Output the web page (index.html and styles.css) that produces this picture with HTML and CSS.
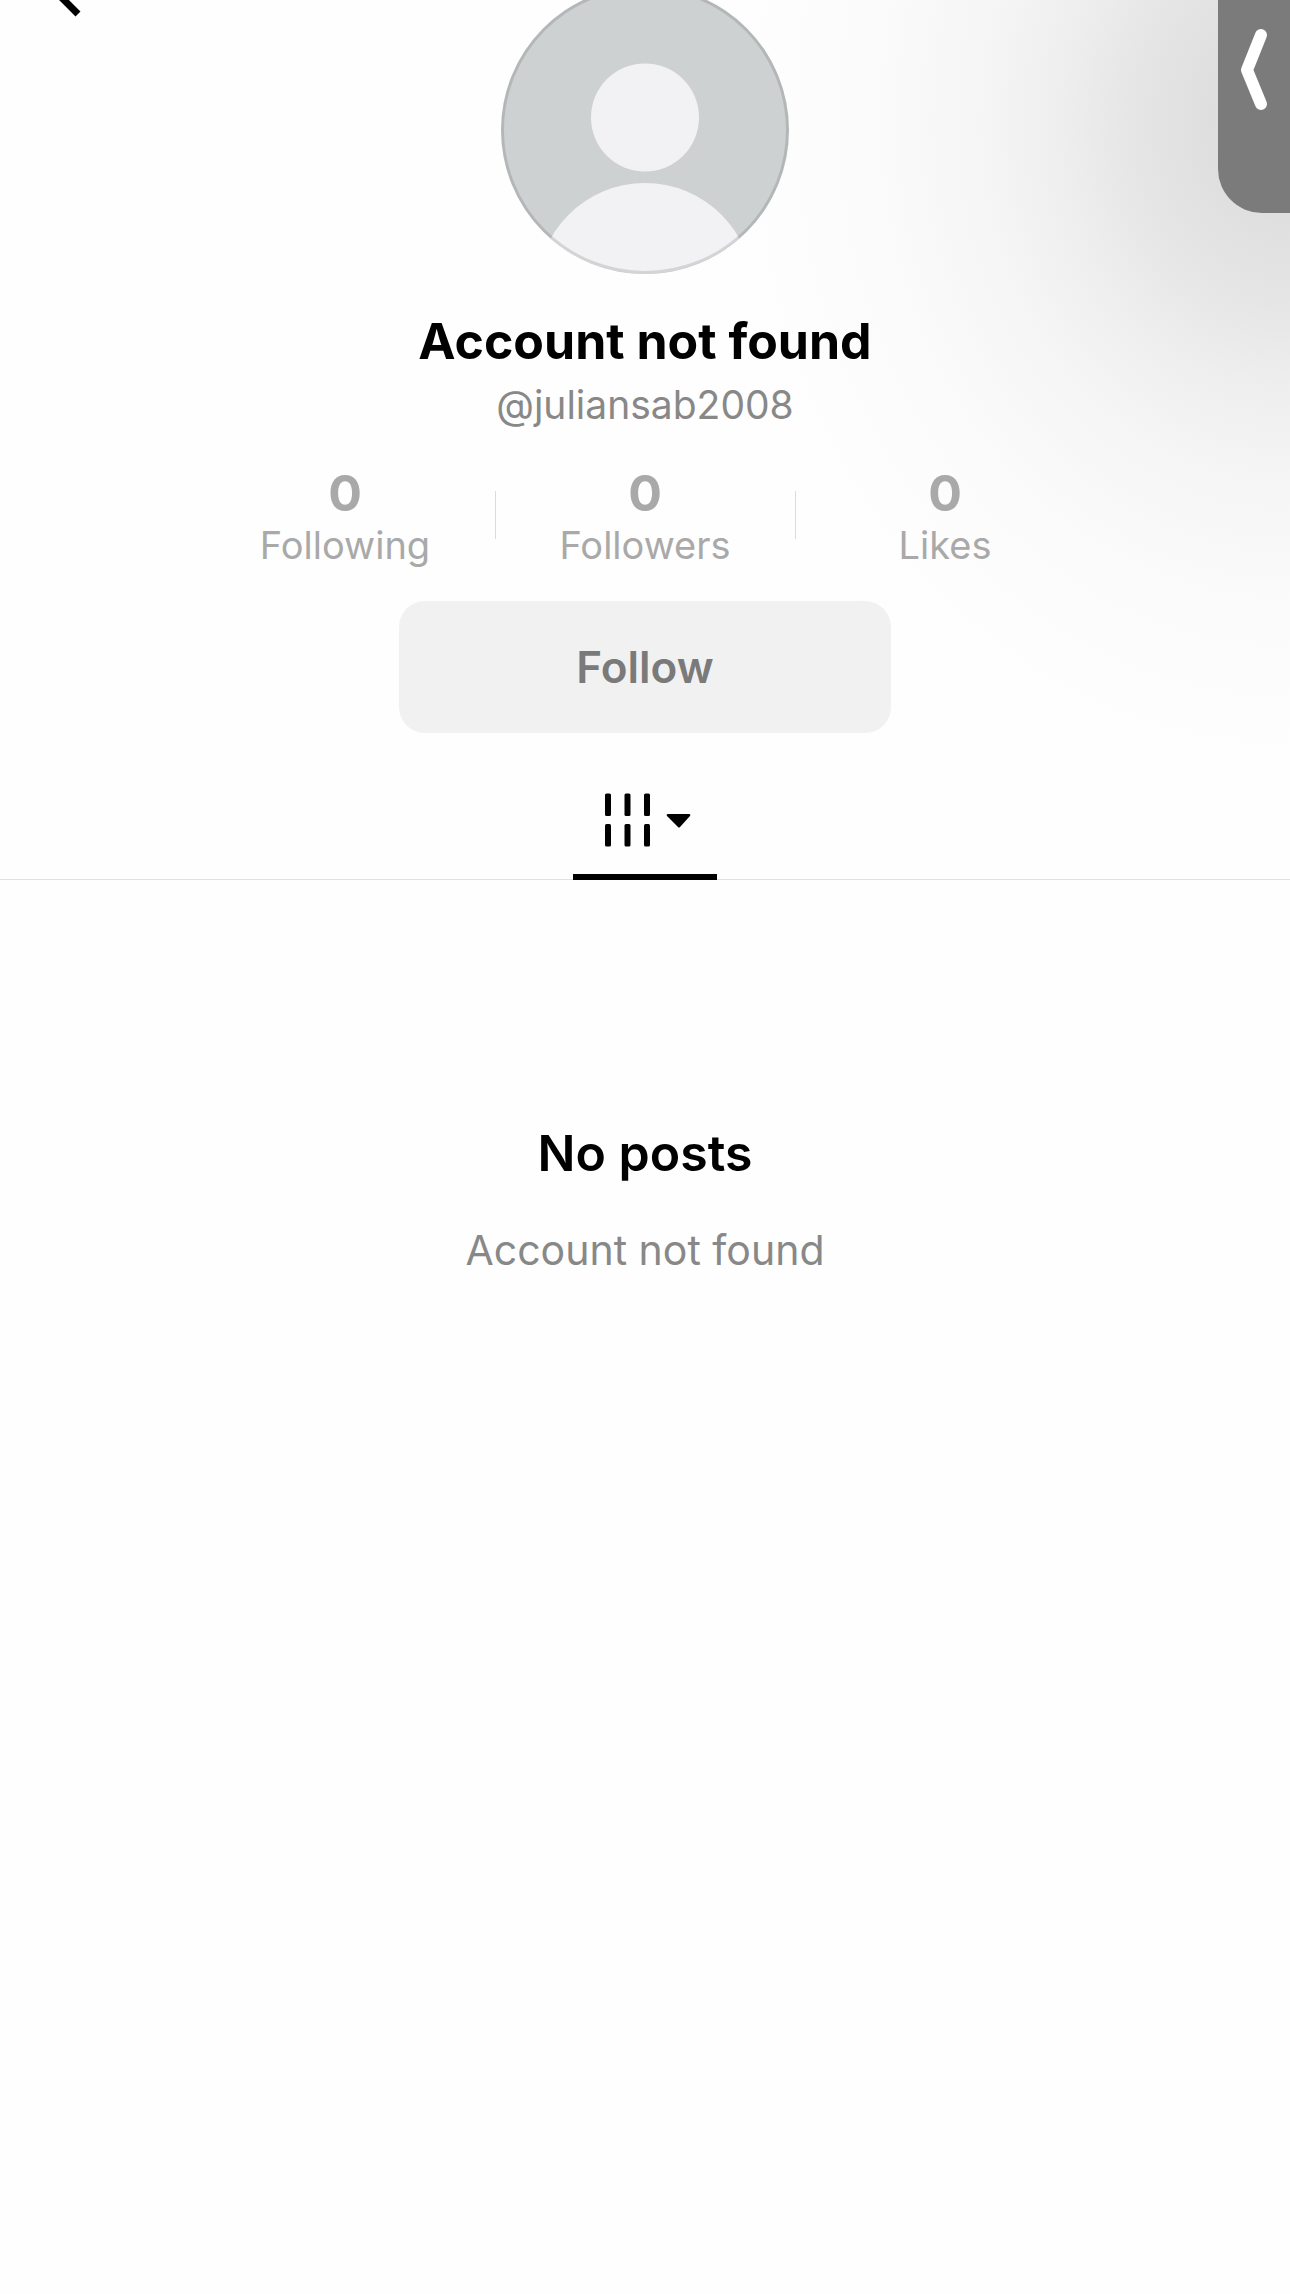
FILE: index.html
```html
<!DOCTYPE html>
<html lang="en">
<head>
    <meta charset="utf-8">
    <meta name="viewport" content="width=device-width, initial-scale=1">
    <title>Account not found</title>
    <link rel="stylesheet" href="styles.css">
</head>
<body>
    <button class="back" type="button" aria-label="Back">
        <svg width="48" height="72" viewBox="0 0 48 72">
            <path d="M37 4L5 36L37 68" fill="none" stroke="#000" stroke-width="7" stroke-linejoin="round"/>
        </svg>
    </button>

    <button class="side-tab" type="button" aria-label="Open panel">
        <svg width="32" height="90" viewBox="0 0 32 90">
            <path d="M23 10L9 45L23 79" fill="none" stroke="#fff" stroke-width="12" stroke-linecap="round" stroke-linejoin="round"/>
        </svg>
    </button>

    <header class="profile">
        <svg class="avatar" viewBox="0 0 288 288" role="img" aria-label="Profile photo">
            <clipPath id="avatar-clip"><circle cx="144" cy="144" r="144"/></clipPath>
            <g clip-path="url(#avatar-clip)">
                <rect width="288" height="288" fill="#cdd1d2"/>
                <circle cx="144" cy="131.5" r="54" fill="#f2f2f5"/>
                <circle cx="144" cy="305" r="108" fill="#f2f2f5"/>
            </g>
            <circle cx="144" cy="144" r="142.5" fill="none" stroke="#000" stroke-opacity="0.12" stroke-width="3"/>
        </svg>
        <h1 class="name">Account not found</h1>
        <p class="handle">@juliansab2008</p>

        <ul class="stats">
            <li class="stat"><strong>0</strong><span>Following</span></li>
            <li class="stat"><strong>0</strong><span>Followers</span></li>
            <li class="stat"><strong>0</strong><span>Likes</span></li>
        </ul>

        <button class="follow" type="button">Follow</button>
    </header>

    <nav class="tabs">
        <button class="tab" type="button" aria-label="Posts">
            <svg width="86" height="54" viewBox="0 0 86 54">
                <g fill="#000">
                    <rect x="3" y="0.5" width="6" height="22.5" rx="1.5"/>
                    <rect x="22.5" y="0.5" width="6" height="22.5" rx="1.5"/>
                    <rect x="42" y="0.5" width="6" height="22.5" rx="1.5"/>
                    <rect x="3" y="31" width="6" height="22.5" rx="1.5"/>
                    <rect x="22.5" y="31" width="6" height="22.5" rx="1.5"/>
                    <rect x="42" y="31" width="6" height="22.5" rx="1.5"/>
                    <path d="M66 21H87Q89 21 88 23L78 34Q77 35 76 34L65 23Q64 21 66 21Z"/>
                </g>
            </svg>
        </button>
    </nav>

    <main class="empty">
        <h2>No posts</h2>
        <p>Account not found</p>
    </main>
</body>
</html>
```
FILE: styles.css
```css
* {
    box-sizing: border-box;
    margin: 0;
    padding: 0;
}
body {
    min-height: 100vh;
    font-family: Inter, "Liberation Sans", sans-serif;
    color: #000;
    text-align: center;
    /* soft shadow spreading out from the side tab */
    background: #fefefe radial-gradient(600px 700px at 100% 120px,
        #dadada 0%, #dfdfdf 14%, #e6e6e6 27%, #eeeeee 38%,
        #f5f5f5 51%, #fafafa 67%, #fdfdfd 84%, #fefefe 100%) no-repeat;
    overflow-x: hidden;
}
button {
    border: none;
    background: none;
    font-family: inherit;
    cursor: pointer;
}
svg {
    display: block;
    overflow: visible;
}
.back {
    position: absolute;
    top: -54px;
    left: 41px;
}
.side-tab {
    position: absolute;
    top: 0;
    right: 0;
    width: 72px;
    height: 213px;
    padding: 25px 0 0 20px;
    background: #7b7b7b;
    border-radius: 0 0 0 44px;
}
.side-tab,
.profile {
    display: flex;
    flex-direction: column;
}
.profile {
    align-items: center;
}
.avatar {
    width: 288px;
    height: 288px;
    margin-top: -14px;
}
.name {
    margin-top: 37px;
    font-size: 50px;
    line-height: 60px;
    font-weight: 700;
}
.handle {
    margin-top: 10px;
    font-size: 39px;
    line-height: 48px;
    color: #888;
}
.stats {
    display: grid;
    grid-template-columns: repeat(3, 1fr);
    width: 100%;
    max-width: 900px;
    margin-top: 34px;
    list-style: none;
    color: #a9a9a9;
}
.stat {
    display: flex;
    flex-direction: column;
    background: linear-gradient(#dcdcdc, #dcdcdc) no-repeat 0 28px / 1px 48px;
}
.stat:first-child {
    background: none;
}
.stat strong {
    font-size: 50px;
    line-height: 60px;
}
.stat span {
    font-size: 38px;
    line-height: 44px;
}
.follow {
    width: 492px;
    max-width: 90%;
    height: 132px;
    margin-top: 34px;
    border-radius: 26px;
    background: #f1f1f1;
    color: #7a7a7a;
    font-size: 44px;
    font-weight: 600;
}
.tabs {
    display: flex;
    justify-content: center;
    margin-top: 40px;
    height: 107px;
    border-bottom: 1px solid #e2e2e2;
}
.tab {
    display: flex;
    justify-content: center;
    width: 144px;
    height: 107px;
    padding-top: 20px;
    border-bottom: 6px solid #000;
}
.empty {
    padding: 243px 32px 0;
}
.empty h2 {
    font-size: 50px;
    line-height: 60px;
    font-weight: 600;
}
.empty p {
    margin-top: 43px;
    font-size: 41px;
    line-height: 48px;
    color: #888;
}
```
